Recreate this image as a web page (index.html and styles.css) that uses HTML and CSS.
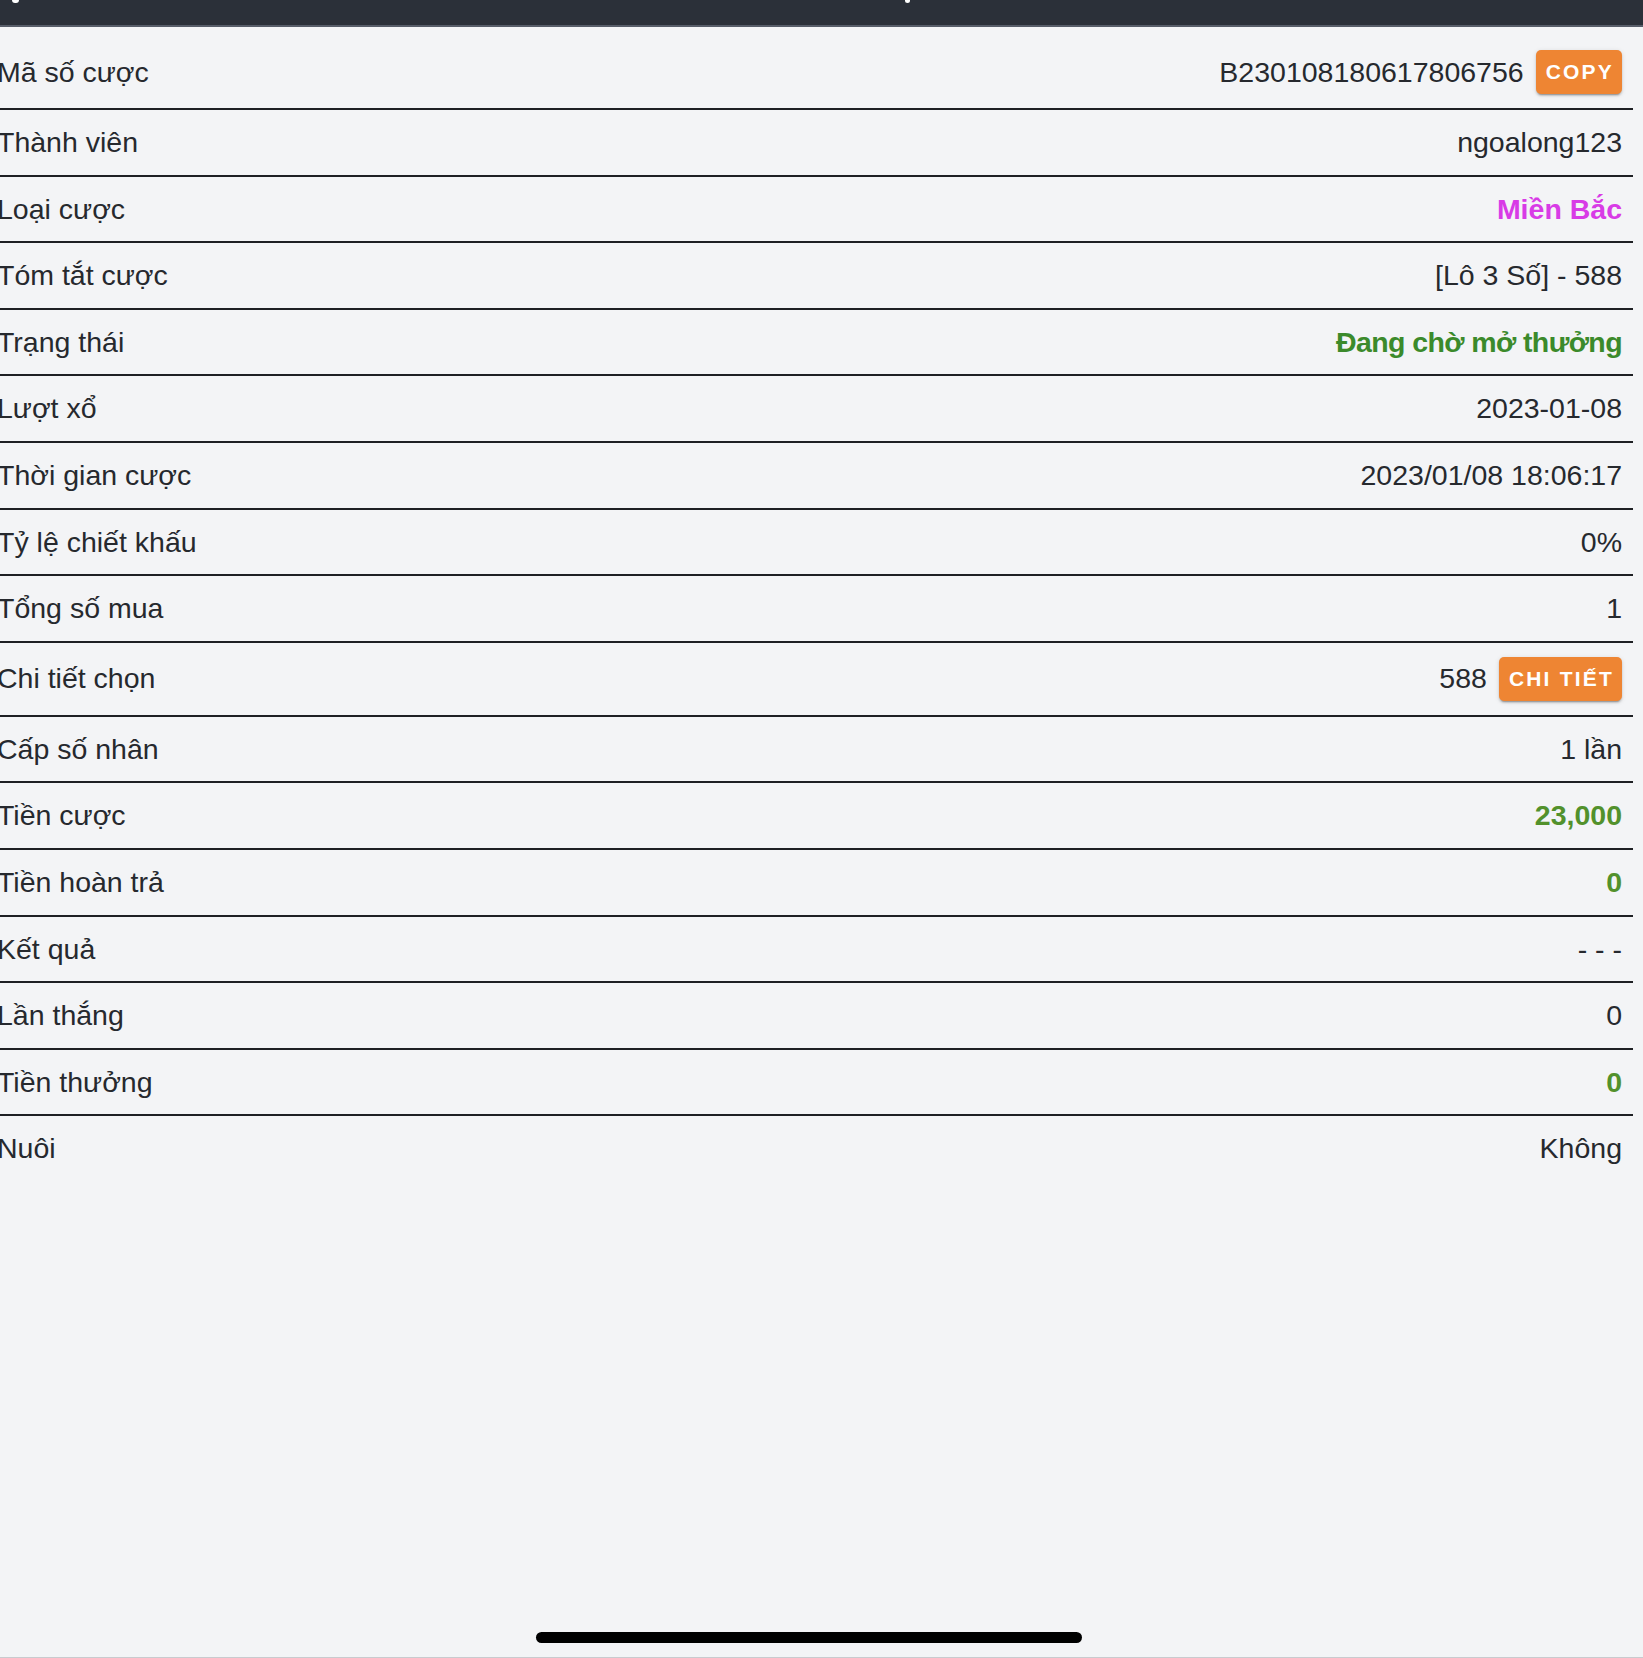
FILE: index.html
```html
<!DOCTYPE html>
<html lang="vi">
<head>
  <meta charset="UTF-8" />
  <meta name="viewport" content="width=device-width, initial-scale=1.0"/>
  <title>Chi tiết cược</title>
  <link rel="stylesheet" href="styles.css">
</head>
<body>
  <div class="page">
    <div class="topbar">
      <span class="tip tip-back"></span>
      <span class="tip tip-title"></span>
    </div>

    <div class="details">
      <div class="row first">
        <span class="label">Mã số cược</span>
        <span class="value">B230108180617806756<button class="btn">Copy</button></span>
      </div>
      <div class="row">
        <span class="label">Thành viên</span>
        <span class="value">ngoalong123</span>
      </div>
      <div class="row">
        <span class="label">Loại cược</span>
        <span class="value pink">Miền Bắc</span>
      </div>
      <div class="row">
        <span class="label">Tóm tắt cược</span>
        <span class="value">[Lô 3 Số] - 588</span>
      </div>
      <div class="row">
        <span class="label">Trạng thái</span>
        <span class="value status">Đang chờ mở thưởng</span>
      </div>
      <div class="row">
        <span class="label">Lượt xổ</span>
        <span class="value">2023-01-08</span>
      </div>
      <div class="row">
        <span class="label">Thời gian cược</span>
        <span class="value">2023/01/08 18:06:17</span>
      </div>
      <div class="row">
        <span class="label">Tỷ lệ chiết khấu</span>
        <span class="value">0%</span>
      </div>
      <div class="row">
        <span class="label">Tổng số mua</span>
        <span class="value">1</span>
      </div>
      <div class="row">
        <span class="label">Chi tiết chọn</span>
        <span class="value">588<button class="btn">Chi tiết</button></span>
      </div>
      <div class="row">
        <span class="label">Cấp số nhân</span>
        <span class="value">1 lần</span>
      </div>
      <div class="row">
        <span class="label">Tiền cược</span>
        <span class="value money">23,000</span>
      </div>
      <div class="row">
        <span class="label">Tiền hoàn trả</span>
        <span class="value money">0</span>
      </div>
      <div class="row">
        <span class="label">Kết quả</span>
        <span class="value">- - -</span>
      </div>
      <div class="row">
        <span class="label">Lần thắng</span>
        <span class="value">0</span>
      </div>
      <div class="row">
        <span class="label">Tiền thưởng</span>
        <span class="value money">0</span>
      </div>
      <div class="row last">
        <span class="label">Nuôi</span>
        <span class="value">Không</span>
      </div>
    </div>

    <div class="home-bar"></div>
  </div>
</body>
</html>
```

FILE: styles.css
```css
body {
  margin: 0;
  font-family: 'Liberation Sans', Arial, sans-serif;
  background: #f3f4f6;
  color: #26292e;
}

.page {
  height: 1658px;
  box-sizing: border-box;
  display: flex;
  flex-direction: column;
  overflow: hidden;
  border-bottom: 1px solid #c9cbcf;
}

.topbar {
  height: 25px;
  flex-shrink: 0;
  background: #2b3039;
  border-bottom: 2px solid #575d69;
  display: flex;
  align-items: flex-start;
}

.tip {
  display: block;
  height: 3px;
  background: #fff;
  border-radius: 0 0 3px 3px;
}

.tip-back {
  width: 7px;
  margin-left: 12px;
}

.tip-title {
  width: 5px;
  margin-left: 886px;
}

.details {
  margin: 0 10px 0 -3px;
  padding-top: 9px;
}

.row {
  display: flex;
  justify-content: space-between;
  align-items: center;
  padding: 14px 11px 14px 0;
  border-bottom: 2px solid #1e2024;
  font-size: 28.5px;
  line-height: 36.6px;
}

.row.last {
  border-bottom: none;
}

.value {
  display: flex;
  align-items: center;
  gap: 12px;
  white-space: pre;
}

.pink {
  color: #d83be6;
  font-weight: bold;
}

.status {
  color: #3b8a2b;
  font-weight: bold;
  letter-spacing: -0.6px;
}

.money {
  color: #52912c;
  font-weight: bold;
}

.btn {
  height: 44px;
  padding: 0 8px 0 10px;
  border: none;
  border-radius: 5px;
  background: #ee8533;
  color: #fff;
  font-family: 'Liberation Sans', Arial, sans-serif;
  font-size: 21px;
  font-weight: bold;
  letter-spacing: 2.2px;
  text-transform: uppercase;
  box-shadow: 0 3px 1px -2px rgba(0,0,0,0.2), 0 2px 2px 0 rgba(0,0,0,0.14), 0 1px 5px 0 rgba(0,0,0,0.12);
  cursor: pointer;
}

.home-bar {
  margin: auto 0 14px 536px;
  width: 546px;
  height: 11px;
  border-radius: 6px;
  background: #000;
  flex-shrink: 0;
}
```
